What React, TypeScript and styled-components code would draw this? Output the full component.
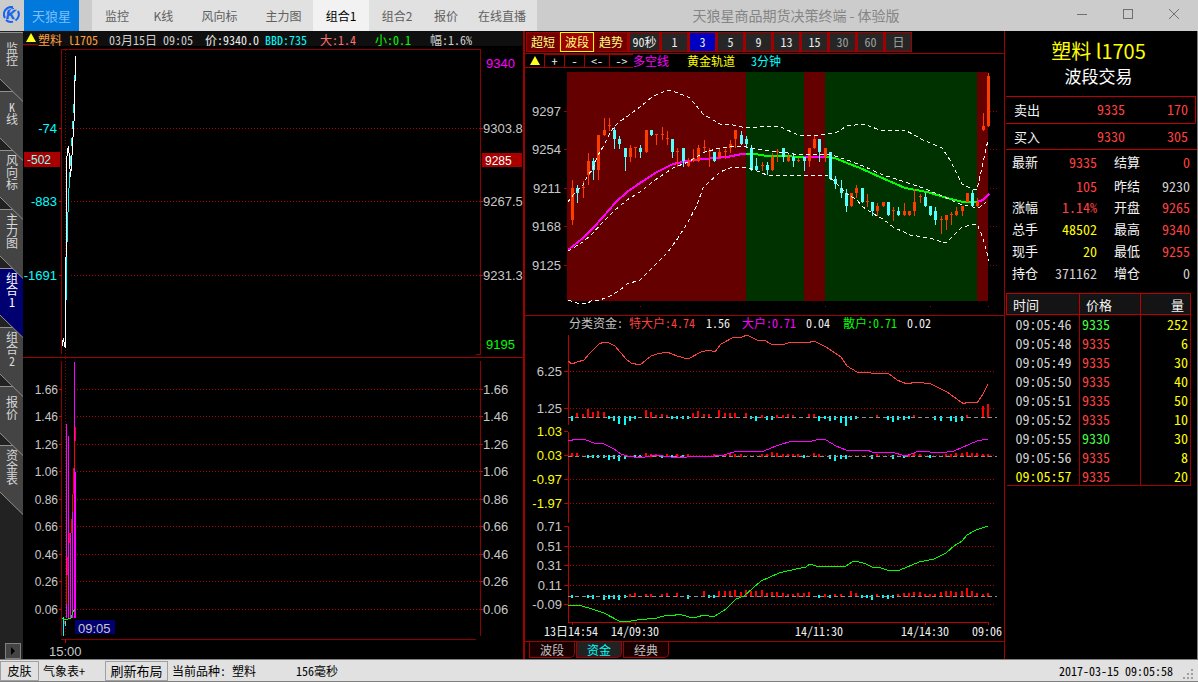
import React from "react";
import styled, { createGlobalStyle, css } from "styled-components";

const fixed = `"Noto Sans Mono CJK SC", "Liberation Mono", "Noto Sans CJK SC", monospace`;
const ui = `"Noto Sans CJK SC", "Liberation Sans", sans-serif`;
const arial = `"Liberation Sans", sans-serif`;

const c = {
  red: "#a00000",
  hot: "#ff4040",
  yellow: "#ffff00",
  cyan: "#00ffff",
  magenta: "#ff00ff",
  green: "#00ff00",
  text: "#d0d0d0",
  white: "#f4f4f4",
};

const Global = createGlobalStyle`
  * { box-sizing: border-box; }
  body { margin: 0; background: #000; }
  button { margin: 0; padding: 0; border: 0; background: none; font: inherit; color: inherit; }
  svg { display: block; }
`;

const Window = styled.div`
  display: flex;
  flex-direction: column;
  min-height: 100vh;
  background: #000;
  color: ${c.text};
  font: 12px/14px ${fixed};
  white-space: pre;
`;

/* Title bar */
const TitleBar = styled.header`
  display: flex;
  height: 31px;
  padding-right: 1px;
  background: #ccc;
  color: #606060;
  font-family: ${ui};
`;
const Logo = styled.div`
  display: flex;
  align-items: center;
  width: 24px;
  padding: 0 0 3px 3px;
`;
const Brand = styled.button`
  width: 55px;
  margin-right: 13px;
  background: #0078dc;
  color: #7cc0ff;
  font-size: 13px;
`;
const Menu = styled.nav`
  display: flex;
  background: #e1e1e1;
`;
const MenuItem = styled.button<{ $w: number; $on?: boolean }>`
  width: ${(p) => p.$w}px;
  ${(p) => p.$on && css`background: #f2f2f2; color: #000;`}
`;
const Caption = styled.h1`
  flex: 1;
  margin: 0;
  padding-right: 4px;
  text-align: center;
  color: #858585;
  font: 14px/31px ${ui};
`;
const WinButton = styled.button`
  display: grid;
  place-items: center;
  width: 46px;
  height: 28px;
`;

/* Work area */
const Work = styled.main`
  flex: 1;
  display: grid;
  grid-template-columns: 23px minmax(0, 500fr) minmax(0, 481fr) 194px;
`;
const Side = styled.nav`
  display: flex;
  flex-direction: column;
  padding-top: 1px;
  background: #222;
`;
const SideTab = styled.button<{ $z: number; $on?: boolean }>`
  position: relative;
  z-index: ${(p) => p.$z};
  display: flex;
  align-items: center;
  justify-content: center;
  width: 23px;
  height: 59px;
  padding-bottom: 15px;
  color: ${(p) => (p.$on ? "#fff" : "#d8d8d8")};
`;
const TabShape = styled.svg`
  position: absolute;
  left: 0;
  top: 0;
  z-index: -1;
`;
const Upright = styled.span`
  writing-mode: vertical-rl;
  text-orientation: upright;
`;
const Scroll = styled.button`
  display: grid;
  place-items: center;
  width: 16px;
  height: 16px;
  margin: auto 0 0 5px;
  border: 1px solid #808080;
  background: #444;
`;

const Pane = styled.section<{ $edge?: number }>`
  display: flex;
  flex-direction: column;
  border-left: ${(p) => p.$edge || 0}px solid ${c.red};
`;
const Chart = styled.svg`
  width: 100%;
  height: auto;
`;
const QuoteBar = styled.div`
  display: flex;
  height: 15px;
  background: #0f0f0f;
  line-height: 17px;
`;
const Marker = styled.div<{ $w: number }>`
  display: flex;
  justify-content: center;
  width: ${(p) => p.$w}px;
  height: 14px;
  padding-top: 2px;
  border-bottom: 1px solid ${c.red};
`;
const Item = styled.span<{ $w?: number; $c?: string }>`
  width: ${(p) => (p.$w ? `${p.$w}px` : "auto")};
  color: ${(p) => p.$c || c.text};
`;
const Rule = styled.hr`
  width: 100%;
  height: 1px;
  margin: 0;
  border: 0;
  background: ${c.red};
`;
const Periods = styled.div`
  display: flex;
  height: 22px;
  padding: 1px 0 1px 1px;
`;
const Mode = styled.button<{ $on?: boolean }>`
  width: 34px;
  border: 1px solid ${(p) => (p.$on ? c.yellow : c.red)};
  background: ${(p) => (p.$on ? "#a00000" : "#700000")};
  color: #ffff80;
`;
const Period = styled.button<{ $wide?: boolean; $state?: "on" | "dim" }>`
  width: ${(p) => (p.$wide ? 32 : 28)}px;
  border: 1px solid ${c.red};
  border-left-width: 2px;
  background: ${(p) => (p.$state === "on" ? "#0000c0" : "#262626")};
  color: ${(p) => (p.$state === "dim" ? "#a0a0a0" : "#ececec")};
`;
const ToolRow = styled.div`
  display: flex;
  height: 14px;
`;
const Tool = styled.button<{ $w: number }>`
  width: ${(p) => p.$w}px;
  border: solid ${c.red};
  border-width: 1px 0 1px 1px;
  color: #ececec;
  line-height: 12px;
`;
const Legend = styled.div`
  display: flex;
  height: 15px;
  padding-left: 44px;
  line-height: 14px;
`;
const PageTabs = styled.div`
  display: flex;
  gap: 1px;
  height: 17px;
  padding-left: 4px;
`;
const PageTab = styled.button<{ $on?: boolean }>`
  width: 46px;
  height: 16px;
  border: 1px solid ${c.red};
  border-top: 0;
  border-bottom-right-radius: 5px;
  background: ${(p) => (p.$on ? "#222" : "#180000")};
  color: ${(p) => (p.$on ? c.cyan : "#c0c0c0")};
  line-height: 13px;
`;

/* Quote panel */
const QuotePane = styled.aside`
  padding-left: 1px;
  border-left: 1px solid ${c.red};
  border-right: 1px solid #808080;
`;
const Symbol = styled.h2`
  margin: 0;
  padding: 6px 6px 0 0;
  text-align: center;
  color: ${c.yellow};
  font: 20px/28px ${ui};
`;
const Strategy = styled.p`
  margin: 0 0 9px;
  padding-right: 6px;
  text-align: center;
  color: #fff;
  font: 17px/22px ${ui};
`;
const Level = styled.div<{ $first?: boolean }>`
  display: grid;
  grid-template-columns: 57px 54px 1fr;
  height: ${(p) => (p.$first ? 27 : 26)}px;
  margin-right: 1px;
  padding: 0 7px 0 8px;
  border-top: 1px solid #c00000;
  border-right: 1px solid ${(p) => (p.$first ? "#c00000" : "transparent")};
  line-height: 25px;
`;
const Label = styled.span`
  color: ${c.white};
  font-size: 13px;
`;
const Num = styled.span<{ $c: string }>`
  text-align: right;
  color: ${(p) => p.$c};
  font-size: 14px;
`;
const Facts = styled.div`
  display: grid;
  grid-template-columns: 36px 49px 17px 30px 46px;
  grid-template-rows: 24px 21px repeat(4, 22px);
  padding-left: 6px;
  margin-bottom: 10px;
  border-top: 1px solid #c00000;
  line-height: 24px;
`;
const Label2 = styled(Label)`
  grid-column: 4;
`;
const Ticks = styled.table`
  width: 184px;
  border-collapse: collapse;
  table-layout: fixed;
  font-size: 14px;
`;
const Th = styled.th<{ $w: number; $end?: boolean }>`
  width: ${(p) => p.$w}px;
  height: 21px;
  padding: 0 6px;
  border: 1px solid #c00000;
  background: #141414;
  color: ${c.white};
  font-weight: 400;
  font-size: 13px;
  line-height: 19px;
  text-align: ${(p) => (p.$end ? "right" : "left")};
`;
const Td = styled.td<{ $c: string; $pad?: number; $end?: boolean }>`
  height: 19px;
  padding: 0 2px 0 ${(p) => p.$pad || 2}px;
  border-right: 1px solid ${c.red};
  color: ${(p) => p.$c};
  line-height: 18px;
  text-align: ${(p) => (p.$end ? "right" : "left")};
`;
const TickBody = styled.tbody`
  border-bottom: 1px solid ${c.red};
`;

/* Status bar */
const Status = styled.footer`
  display: flex;
  align-items: center;
  height: 23px;
  border-top: 1px solid #808080;
  border-bottom: 1px solid #808080;
  background: #e1e1e1;
  color: #000;
  line-height: 20px;
`;
const StatusButton = styled.button<{ $w: number; $size?: number }>`
  width: ${(p) => p.$w}px;
  height: 20px;
  margin-right: 4px;
  border: 1px solid #a0a0a0;
  font-size: ${(p) => p.$size || 12}px;
  line-height: 16px;
`;
const Clock = styled.time`
  margin-left: auto;
  margin-right: 9px;
`;

type Pt = string;
const dots = "1 2";

const HDots = ({ x1, x2, ys }: { x1: number; x2: number; ys: number[] }) => (
  <g stroke="#b00000" strokeDasharray={dots} shapeRendering="crispEdges">
    {ys.map((y) => <line key={y} x1={x1} x2={x2} y1={y + 0.5} y2={y + 0.5} />)}
  </g>
);

const AxisText = ({ x, end, rows, size = 13, fill = "#c8c8c8" }: {
  x: number; end?: boolean; rows: [string, number][]; size?: number; fill?: string;
}) => (
  <g fontFamily={arial} fontSize={size} fill={fill} textAnchor={end ? "end" : "start"}>
    {rows.map(([t, y]) => <text key={t} x={x} y={y + 5}>{t}</text>)}
  </g>
);

const Line = ({ pts, stroke, w = 1, dash }: { pts: Pt; stroke: string; w?: number; dash?: string }) => (
  <polyline points={pts} fill="none" stroke={stroke} strokeWidth={w} strokeDasharray={dash} />
);

const Bars = ({ base, data }: { base: number; data: number[][] }) => (
  <g>
    {data.map(([x, h]) => (
      <rect key={x} x={x - 1} width="2" y={h > 0 ? base - h : base - 1} height={Math.abs(h) + 1} fill={h > 0 ? "#ff0000" : c.cyan} />
    ))}
  </g>
);

const Triangle = () => (
  <svg width="10" height="9" viewBox="0 0 10 9"><path d="M5 0 L10 9 H0 Z" fill="#ffff20" /></svg>
);

const volRows: [string, number][] = [
  ["1.66", 389], ["1.46", 416], ["1.26", 444], ["1.06", 471], ["0.86", 499],
  ["0.66", 526], ["0.46", 554], ["0.26", 581], ["0.06", 609],
];

const TrendChart = () => (
  <Chart viewBox="23 46 500 311" role="img" aria-label="分时走势">
    <g stroke="#8c0000" fill="none" shapeRendering="crispEdges">
      <path d="M61.5 354 V49.5 H480.5 V354.5 H476" />
      <path d="M65.5 50 V357" strokeDasharray={dots} />
      <path d="M59 128.5 H62 M59 201.5 H62 M59 275.5 H62 M480 128.5 H483 M480 201.5 H483 M480 275.5 H483" stroke="#d00000" />
    </g>
    <HDots x1={71} x2={480} ys={[128, 201, 275]} />
    <AxisText x={57} end fill={c.cyan} rows={[["-74", 128], ["-883", 201], ["-1691", 275]]} />
    <AxisText x={483} rows={[["9303.8", 128], ["9267.5", 201], ["9231.3", 275]]} />
    <AxisText x={486} fill={c.magenta} rows={[["9340", 63]]} />
    <AxisText x={486} fill={c.green} rows={[["9195", 344]]} />
    <rect x="24" y="152" width="36" height="15" fill="#a80000" />
    <rect x="482" y="153" width="40" height="14" fill="#a80000" />
    <AxisText x={27} size={12} fill="#80ffff" rows={[["-502", 159]]} />
    <AxisText x={485} size={12} fill="#fff" rows={[["9285", 160]]} />
    <g shapeRendering="crispEdges">
      <Line stroke="#fff" pts="62.5,346 62.5,342 63.5,338 64.5,346 65.5,348 65.5,257 66.5,257 66.5,161 67.5,151 68.5,146 69.5,160 70.5,177 71.5,165 72.5,145 73.5,129 74.5,113 74.5,80 75.5,80 75.5,56" />
      <path stroke={c.cyan} d="M66.5 300 V257 M67.5 242 V212 M68.5 212 V188 M69.5 188 V172 M70.5 166 V156 M71.5 146 V138 M72.5 129 V121 M73.5 113 V104 M74.5 80 V75" />
    </g>
  </Chart>
);

const VolumeChart = () => (
  <Chart viewBox="23 358 500 301" role="img" aria-label="量能">
    <g stroke="#8c0000" fill="none" shapeRendering="crispEdges">
      <path d="M61.5 361 V636 M480.5 361 V636 M61 639.5 H476" />
      <path d="M65.5 358 V636" strokeDasharray={dots} />
      <path stroke="#d00000" d={volRows.map(([, y]) => `M59 ${y}.5 H62 M480 ${y}.5 H483`).join(" ") + " M65.5 639 V643"} />
    </g>
    <HDots x1={77} x2={480} ys={volRows.map((r) => r[1])} />
    <AxisText x={58} end size={12} rows={volRows} />
    <AxisText x={483} rows={volRows} />
    <g shapeRendering="crispEdges">
      <path stroke={c.magenta} d="M66.5 618 V424 M68.5 618 V436 M70.5 618 V533 M72.5 618 V512 M74.5 618 V362 M75.5 618 V472" />
      <path stroke="#ff0000" d="M66.5 604 V575 M67.5 575 V557 M69.5 543 V533 M71.5 533 V519 M72.5 512 V494 M73.5 494 V468 M74.5 468 V441 M75.5 441 V427 M64.5 621 V624" />
      <path stroke={c.cyan} d="M63.5 617 V636 M65.5 621 V626" />
      <Line stroke={c.green} pts="62,618 64,620 68,619 71,618 73,612 75,609" />
    </g>
    <rect x="75" y="620" width="40" height="14" fill="#000070" />
    <AxisText x={78} size={13} rows={[["09:05", 628]]} />
    <AxisText x={49} rows={[["15:00", 651]]} />
  </Chart>
);

// Each candle: centre x, high, low, body top, body bottom, 1 = rising
const candles = [
  [572,180,225,188,220,1],[577,185,203,188,193,0],[583,181,198,187,188,1],[588,153,185,161,175,1],[593,158,180,161,170,0],
  [598,135,180,135,170,1],[604,118,136,130,135,1],[609,118,131,125,126,1],[614,127,149,130,139,0],[619,136,149,139,144,0],
  [625,148,171,148,157,0],[630,145,162,148,157,1],[635,147,158,147,148,1],[640,145,158,148,152,0],[646,130,153,130,152,1],
  [651,130,136,130,135,0],[656,134,145,134,135,1],[662,127,140,134,135,1],[667,131,145,138,139,1],[672,139,158,139,152,0],
  [677,148,167,151,152,1],[683,148,167,148,161,0],[688,158,167,161,166,1],[693,149,162,158,161,1],[698,145,162,148,161,1],
  [704,140,153,147,148,1],[709,148,167,151,152,1],[714,152,162,152,161,0],[719,149,158,152,157,1],[725,149,159,151,152,1],
  [730,140,153,144,148,1],[735,130,148,130,139,1],[741,131,145,135,144,0],[746,136,148,139,144,0],[751,145,171,148,170,0],
  [756,158,171,166,170,0],[762,162,171,165,166,1],[767,162,175,165,170,0],[772,153,171,157,170,1],[777,149,162,151,152,1],
  [783,148,162,148,157,0],[788,153,162,157,161,1],[793,153,167,157,161,0],[798,158,162,160,161,1],[804,157,171,157,161,0],
  [809,148,167,148,161,1],[814,136,149,139,148,1],[819,139,162,139,152,0],[825,148,162,148,157,1],[830,152,180,152,179,0],
  [835,176,189,179,184,0],[841,180,198,188,193,0],[846,189,212,193,206,0],[851,193,207,193,206,1],[856,185,198,188,193,1],
  [862,188,203,188,202,0],[867,194,207,201,202,1],[872,202,216,202,211,0],[877,203,216,206,211,1],[883,202,207,202,206,1],
  [888,202,216,202,215,0],[893,207,221,210,211,1],[898,207,216,211,215,0],[904,203,216,211,215,1],[909,211,216,211,215,1],
  [914,189,216,202,211,1],[920,194,203,196,197,1],[925,193,207,197,206,0],[930,206,216,206,215,0],[935,207,225,211,220,0],
  [941,216,234,219,220,1],[946,215,230,215,220,1],[951,212,225,214,215,1],[956,207,216,211,215,1],[962,206,216,206,211,1],
  [967,193,202,193,202,1],[972,190,207,193,206,0],[977,198,207,202,206,1],[983,113,131,126,130,1],[988,73,127,76,126,1],
];

const zones: [number, number, string][] = [
  [567, 746, "#640000"], [746, 804, "#003200"], [804, 825, "#640000"], [825, 977, "#003200"], [977, 988, "#640000"],
];

const CandleChart = () => (
  <Chart viewBox="525 68 479 247" role="img" aria-label="K线">
    {zones.map(([a, b, f]) => <rect key={a} x={a} y="72" width={b - a} height="229" fill={f} shapeRendering="crispEdges" />)}
    <AxisText x={561} end rows={[["9297", 111], ["9254", 149], ["9211", 188], ["9168", 226], ["9125", 265]]} />
    <g stroke="#a00000" shapeRendering="crispEdges">
      {[111, 149, 188, 226, 265].map((y) => (
        <g key={y}>
          <line x1="564" x2="567" y1={y + 0.5} y2={y + 0.5} />
          <line x1="990" x2="997" y1={y + 0.5} y2={y + 0.5} strokeDasharray={dots} />
        </g>
      ))}
      <path d="M577 306.5 h1 M640 306.5 h1 M825 306.5 h1 M930 306.5 h1 M988 306.5 h1" />
    </g>
    <g shapeRendering="crispEdges">
      <Line w={2} stroke={c.magenta} pts="568,250 583,238 593,228 603,217 615,203 627,192 640,183 657,172 673,164 688,161 703,159 727,157 742,154 746,154" />
      <Line w={2} stroke={c.green} pts="746,154 755,154 767,156 780,156 804,157" />
      <Line w={2} stroke={c.magenta} pts="804,157 825,157" />
      <Line w={2} stroke={c.green} pts="825,157 835,158 847,163 860,168 880,177 905,188 927,192 947,198 963,202 977,202" />
      <Line w={2} stroke={c.magenta} pts="977,202 983,200 989,194" />
      {candles.map(([x, hi, lo, top, bot, up]) => (
        <g key={x} fill={up ? "#ff3c00" : "#54ffff"}>
          <rect x={x} y={hi} width="1" height={lo - hi} />
          <rect x={x - 1} y={top} width="3" height={bot - top} />
        </g>
      ))}
      <g>
        <Line dash="4 3" stroke="#fff" pts="568,202 573,195 583,185 588,175 593,169 597,157 603,147 609,135 614,127 619,122 625,118 640,107 652,97 663,92 668,90 675,92 683,95 690,98 703,114 720,124 733,125 746,128 757,127 777,126 783,128 798,135 805,136 820,135 835,133 847,126 863,124 883,131 893,130 905,130 923,140 942,148 950,160 962,184 972,189 977,190 983,163 988,140" />
        <Line dash="4 3" stroke="#fff" pts="568,251 573,248 583,242 593,233 603,222 615,210 627,200 640,192 655,180 673,168 688,162 705,152 720,148 740,146 752,148 777,152 783,152 798,155 827,154 835,156 847,160 863,166 883,175 893,178 905,182 923,188 942,196 962,205 973,207 980,207 986,202" />
        <Line dash="4 3" stroke="#fff" pts="568,300 577,303 588,303 593,300 600,300 610,296 620,290 627,284 640,280 648,272 668,252 678,238 688,222 697,205 703,188 720,172 733,167 746,167 757,171 767,175 783,175 827,175 835,182 841,188 847,194 857,200 863,207 877,216 883,219 893,227 910,235 930,238 942,242 947,242 962,227 977,224 983,238 989,261" />
      </g>
    </g>
  </Chart>
);

const hugeBars = [[572,-4],[577,4],[583,3],[588,8],[593,5],[598,6],[604,5],[609,-2],[614,-4],[619,-7],[625,-8],[630,-4],[635,-2],[646,7],[651,5],[656,2],[662,3],[667,2],[672,-2],[677,-2],[683,-2],[688,-2],[693,4],[698,6],[704,3],[709,3],[719,7],[725,4],[730,4],[735,4],[746,4],[751,-2],[756,-4],[762,2],[767,-3],[772,-3],[777,2],[783,2],[788,3],[793,2],[809,3],[814,3],[819,-4],[825,-2],[830,-4],[835,-3],[841,-6],[846,-9],[851,-3],[856,-2],[877,2],[888,-3],[893,-5],[898,-3],[904,-3],[909,-2],[914,2],[935,-3],[941,-4],[951,-4],[956,-5],[962,-4],[967,2],[983,11],[988,13]];
const bigBars = [[572,3],[577,3],[588,-2],[593,-2],[598,-2],[604,-2],[609,-4],[614,-3],[619,-5],[625,-3],[635,-2],[640,-2],[646,3],[651,2],[656,2],[662,-2],[667,2],[672,-2],[677,2],[683,-2],[688,2],[714,2],[725,2],[730,3],[735,2],[741,2],[762,2],[767,2],[772,4],[777,3],[783,2],[788,2],[793,2],[798,2],[804,-2],[814,3],[819,2],[830,-3],[835,-5],[841,-3],[846,-3],[872,-3],[877,2],[893,-3],[904,-2],[909,2],[914,3],[920,2],[930,-2],[946,2],[951,2],[956,3],[962,3],[967,4],[972,3],[977,3],[983,2],[988,2]];
const smallBars = [[572,-2],[588,-2],[593,-3],[604,-4],[609,-3],[614,-3],[619,-4],[625,-2],[630,2],[635,3],[646,2],[651,2],[662,2],[667,3],[677,3],[688,-3],[704,5],[709,-2],[714,-2],[719,5],[725,5],[730,5],[735,6],[741,4],[746,6],[751,5],[756,5],[762,6],[767,3],[772,4],[777,4],[783,3],[788,2],[793,2],[798,3],[804,3],[809,4],[819,-2],[825,2],[830,-2],[835,2],[841,2],[851,5],[856,3],[862,-2],[867,-2],[872,-4],[877,2],[883,-2],[888,-3],[893,-2],[898,2],[904,3],[909,3],[914,4],[920,4],[925,2],[930,2],[935,2],[941,4],[946,5],[951,5],[956,4],[962,5],[967,8],[972,5],[977,3],[983,2],[988,3]];

const FundChart = () => (
  <Chart viewBox="525 331 479 310" role="img" aria-label="分类资金">
    <HDots x1={570} x2={996} ys={[371, 408, 455, 479, 503, 546, 565, 585, 604]} />
    <g stroke="#c00000" fill="none" shapeRendering="crispEdges">
      <path d="M568.5 335 V425 M568.5 432 V523 M568.5 526 V622.5 H988.5 V625 M572.5 622 V625 M635.5 622 V625 M819.5 622 V625 M925.5 622 V625" />
      <path d={[371, 408, 431, 455, 479, 503, 526, 546, 565, 585, 604].map((y) => `M564 ${y}.5 H568`).join(" ")} />
    </g>
    <g shapeRendering="crispEdges">
      <Bars base={417} data={hugeBars} />
      <Bars base={456} data={bigBars} />
      <Bars base={596} data={smallBars} />
      <g stroke="#909090" strokeDasharray="4 3">
        <path d="M568 417.5 H997" /><path d="M568 456.5 H997" /><path d="M568 596.5 H997" />
      </g>
      <Line stroke={c.hot} pts="568,361 572,364 577,362 584,360 589,354 599,344 604,342 609,343 615,346 626,359 631,363 640,365 651,356 657,354 667,352 677,356 688,359 701,352 709,350 715,352 721,344 734,337 742,337 747,335 757,340 764,340 771,344 785,344 791,342 807,343 814,341 826,347 841,357 847,366 857,372 871,373 888,373 897,380 907,384 916,382 931,384 947,392 961,402 964,404 967,402 977,403 983,394 988,384" />
      <Line stroke={c.magenta} pts="568,441 577,439 586,440 594,443 604,444 614,449 621,454 627,456 641,458 654,455 671,457 687,457 714,456 724,455 737,451 764,451 776,446 792,441 809,442 819,439 826,440 836,446 846,450 867,450 872,452 891,452 906,456 919,451 941,453 954,451 977,441 988,439" />
      <Line stroke={c.green} pts="568,605 582,606 592,609 604,613 619,621 626,622 637,620 657,618 667,615 672,616 679,614 689,617 697,617 704,615 709,616 715,616 726,609 736,599 744,596 761,581 779,573 787,571 806,567 810,564 819,567 824,566 831,567 836,566 846,566 852,562 856,561 866,564 872,567 881,568 887,570 900,570 919,562 934,559 946,553 954,546 962,541 967,535 976,530 988,526" />
    </g>
    <AxisText x={562} end rows={[["6.25", 371], ["1.25", 408], ["0.71", 526], ["0.51", 546], ["0.31", 565], ["0.11", 585], ["-0.09", 604]]} />
    <AxisText x={562} end fill={c.yellow} rows={[["1.03", 431], ["0.03", 455], ["-0.97", 479], ["-1.97", 503]]} />
    <g fontFamily={fixed} fontSize="12" fill="#f0f0f0" textAnchor="middle">
      <text x="571" y="636">13日14:54</text>
      <text x="635" y="636">14/09:30</text>
      <text x="819" y="636">14/11:30</text>
      <text x="925" y="636">14/14:30</text>
      <text x="987" y="636">09:06</text>
    </g>
  </Chart>
);

const menu: [string, number][] = [
  ["监控", 50], ["K线", 43], ["风向标", 69], ["主力图", 59], ["组合1", 56], ["组合2", 56], ["报价", 42], ["在线直播", 70],
];
const sideTabs = ["监控", "K线", "风向标", "主力图", "组合1", "组合2", "报价", "资金表"];
const periods: [string, ("on" | "dim")?][] = [
  ["1"], ["3", "on"], ["5"], ["9"], ["13"], ["15"], ["30", "dim"], ["60", "dim"], ["日", "dim"],
];
const facts: [string, string, string, string, string, string][] = [
  ["最新", "9335", c.hot, "结算", "0", c.hot],
  ["", "105", c.hot, "昨结", "9230", c.text],
  ["涨幅", "1.14%", c.hot, "开盘", "9265", c.hot],
  ["总手", "48502", c.yellow, "最高", "9340", c.hot],
  ["现手", "20", c.yellow, "最低", "9255", c.hot],
  ["持仓", "371162", c.text, "增仓", "0", c.text],
];
const ticks: [string, string, string][] = [
  ["09:05:46", "9335", "252"], ["09:05:48", "9335", "6"], ["09:05:49", "9335", "30"], ["09:05:50", "9335", "40"],
  ["09:05:51", "9335", "50"], ["09:05:52", "9335", "10"], ["09:05:55", "9330", "30"], ["09:05:56", "9335", "8"],
  ["09:05:57", "9335", "20"],
];
const risingTicks = [0, 6];

export default function App() {
  return (
    <>
      <Global />
      <Window>
        <TitleBar>
          <Logo>
            <svg width="17" height="17" viewBox="0 0 17 17" fill="none" stroke="#1464f0">
              <path d="M10 1.2 A7.3 7.3 0 0 0 2 12" strokeWidth="2" />
              <path d="M3 14 A7.3 7.3 0 0 0 10 15.6" strokeWidth="2" />
              <path d="M15 5 A7.3 7.3 0 0 1 12.5 14.5" strokeWidth="2" />
              <path d="M11 2.5 A6 6 0 0 0 4.5 8" />
              <text x="3" y="13" fill="#1464f0" stroke="#1464f0" strokeWidth="0.5" fontFamily={arial} fontSize="13" fontWeight="700" fontStyle="italic">K</text>
            </svg>
          </Logo>
          <Brand>天狼星</Brand>
          <Menu>
            {menu.map(([t, w]) => <MenuItem key={t} $w={w} $on={t === "组合1"}>{t}</MenuItem>)}
          </Menu>
          <Caption>天狼星商品期货决策终端 - 体验版</Caption>
          <WinButton aria-label="最小化"><svg width="10" height="10"><path d="M0 5.5 H10" stroke="#707070" /></svg></WinButton>
          <WinButton aria-label="最大化"><svg width="10" height="10"><rect x="0.5" y="0.5" width="9" height="9" fill="none" stroke="#707070" /></svg></WinButton>
          <WinButton aria-label="关闭"><svg width="10" height="10"><path d="M0 0 L10 10 M10 0 L0 10" stroke="#707070" /></svg></WinButton>
        </TitleBar>

        <Work>
          <Side>
            {sideTabs.map((t, i) => {
              const on = t === "组合1";
              return (
                <SideTab key={t} $z={sideTabs.length - i} $on={on}>
                  <TabShape width="23" height="70" viewBox="0 0 23 70">
                    <path d="M0 0 H23 V69.5 L0 47 Z" fill={on ? "#000070" : "#444"} />
                    <path d="M0 0.5 H23 M0 47 L23 69.5" stroke="#909090" fill="none" />
                  </TabShape>
                  <Upright>{t}</Upright>
                </SideTab>
              );
            })}
            <Scroll aria-label="更多"><svg width="4" height="8"><path d="M0 0 L4 4 L0 8 Z" fill="#000" /></svg></Scroll>
          </Side>

          <Pane>
            <QuoteBar>
              <Marker $w={15}><Triangle /></Marker>
              <Item $w={71} $c="#ffa040">塑料 l1705</Item>
              <Item $w={96}>03月15日 09:05</Item>
              <Item $w={60} $c="#f0f0f0">价:9340.0</Item>
              <Item $w={55} $c={c.cyan}>BBD:735</Item>
              <Item $w={55} $c="#ff7070">大:1.4</Item>
              <Item $w={55} $c={c.green}>小:0.1</Item>
              <Item>幅:1.6%</Item>
            </QuoteBar>
            <TrendChart />
            <Rule />
            <VolumeChart />
          </Pane>

          <Pane $edge={2}>
            <Periods>
              <Mode>超短</Mode>
              <Mode $on>波段</Mode>
              <Mode>趋势</Mode>
              <Period $wide>90秒</Period>
              {periods.map(([t, s]) => <Period key={t} $state={s}>{t}</Period>)}
            </Periods>
            <Rule />
            <ToolRow>
              <Marker $w={19}><Triangle /></Marker>
              <Tool $w={20}>+</Tool>
              <Tool $w={20}>-</Tool>
              <Tool $w={25}>&lt;-</Tool>
              <Tool $w={24}>-&gt;</Tool>
              <Item $w={54} $c={c.magenta}>多空线</Item>
              <Item $w={64} $c={c.yellow}>黄金轨道</Item>
              <Item $c={c.cyan}>3分钟</Item>
            </ToolRow>
            <CandleChart />
            <Rule />
            <Legend>
              <Item $w={60} $c="#c0c0c0">分类资金:</Item>
              <Item $w={77} $c={c.hot}>特大户:4.74</Item>
              <Item $w={36} $c="#f0f0f0">1.56</Item>
              <Item $w={64} $c={c.magenta}>大户:0.71</Item>
              <Item $w={37} $c="#f0f0f0">0.04</Item>
              <Item $w={64} $c={c.green}>散户:0.71</Item>
              <Item $c="#f0f0f0">0.02</Item>
            </Legend>
            <FundChart />
            <Rule />
            <PageTabs>
              <PageTab>波段</PageTab>
              <PageTab $on>资金</PageTab>
              <PageTab>经典</PageTab>
            </PageTabs>
          </Pane>

          <QuotePane>
            <Symbol>塑料 l1705</Symbol>
            <Strategy>波段交易</Strategy>
            <Level $first><Label>卖出</Label><Num $c={c.hot}>9335</Num><Num $c={c.hot}>170</Num></Level>
            <Level><Label>买入</Label><Num $c={c.hot}>9330</Num><Num $c={c.hot}>305</Num></Level>
            <Facts>
              {facts.map(([a, v, vc, b, w, wc]) => (
                <React.Fragment key={b}>
                  <Label>{a}</Label><Num $c={vc}>{v}</Num><Label2>{b}</Label2><Num $c={wc}>{w}</Num>
                </React.Fragment>
              ))}
            </Facts>
            <Ticks>
              <thead>
                <tr><Th $w={73}>时间</Th><Th $w={61}>价格</Th><Th $w={50} $end>量</Th></tr>
              </thead>
              <TickBody>
                {ticks.map(([t, p, q], i) => (
                  <tr key={t}>
                    <Td $pad={9} $c={i === ticks.length - 1 ? c.yellow : c.text}>{t}</Td>
                    <Td $c={risingTicks.includes(i) ? "#40ff40" : c.hot}>{p}</Td>
                    <Td $end $c={c.yellow}>{q}</Td>
                  </tr>
                ))}
              </TickBody>
            </Ticks>
          </QuotePane>
        </Work>

        <Status>
          <StatusButton $w={39}>皮肤</StatusButton>
          <Item $w={62} $c="#000">气象表+</Item>
          <StatusButton $w={63} $size={13}>刷新布局</StatusButton>
          <Item $w={124} $c="#000">当前品种: 塑料</Item>
          <Item $c="#000">156毫秒</Item>
          <Clock dateTime="2017-03-15T09:05:58">2017-03-15 09:05:58</Clock>
          <svg width="16" height="20" fill="#a0a0a0">
            <path d="M9 8h2v2h-2z M5 12h2v2h-2z M9 12h2v2h-2z M1 16h2v2h-2z M5 16h2v2h-2z M9 16h2v2h-2z" />
          </svg>
        </Status>
      </Window>
    </>
  );
}
